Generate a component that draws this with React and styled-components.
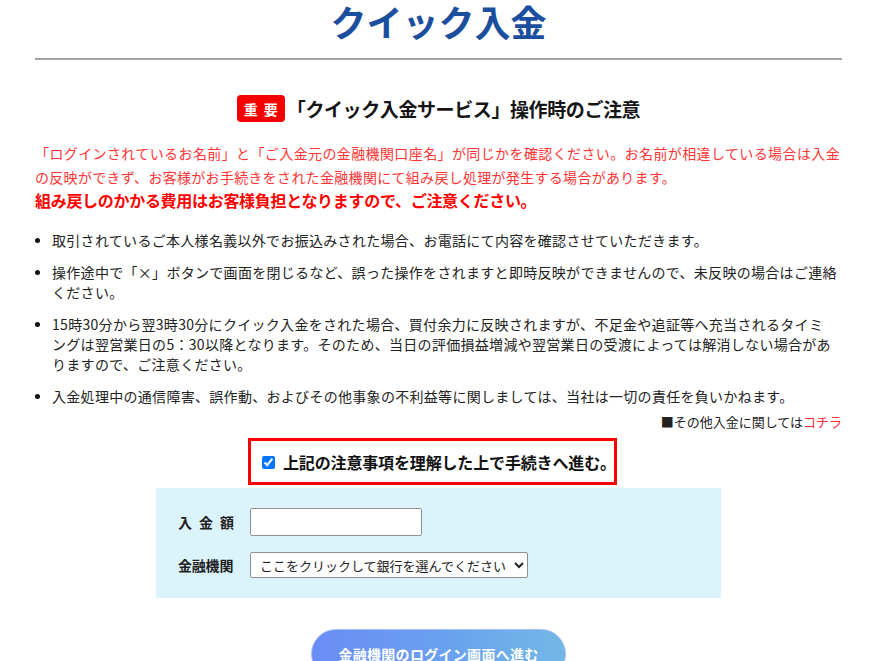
import React from "react";
import styled, { createGlobalStyle } from "styled-components";

const GlobalStyle = createGlobalStyle`
  html { overflow: hidden; }
  body {
    margin: 0;
    background: #fff;
    font-family: "Noto Sans CJK JP", "Noto Sans", sans-serif;
    color: #222;
    text-spacing-trim: space-all;
  }
`;

const Page = styled.div`
  width: 807px;
  margin-left: 35px;
`;

const Title = styled.h1`
  margin: 0;
  padding-top: 1px;
  text-align: center;
  font-size: 36px;
  line-height: 40px;
  font-weight: 700;
  color: #1b4f9e;
`;

const Rule = styled.hr`
  margin: 17px 0 0;
  height: 0;
  border: 0;
  border-top: 2px solid #a3a3a3;
`;

const NoticeHeading = styled.h2`
  margin: 35px 0 0;
  display: flex;
  justify-content: center;
  align-items: center;
  gap: 2px;
  font-weight: 700;
`;

const Badge = styled.span`
  display: inline-flex;
  align-items: center;
  justify-content: center;
  width: 48px;
  height: 27px;
  border-radius: 4px;
  background: #f50000;
  color: #fff;
  font-size: 14px;
  letter-spacing: 6px;
  text-indent: 6px;
`;

const HeadingText = styled.span`
  font-size: 19px;
  letter-spacing: -0.4px;
  line-height: 27px;
  color: #151515;
`;

const Warning = styled.div`
  margin: 19px 0 0;
  width: 805px;
  color: #ff3535;
  font-size: 14px;
  letter-spacing: 0.3px;
  line-height: 24px;
`;

const WarningLine = styled.span`
  display: block;
  white-space: nowrap;
  text-align: left;
  text-align-last: ${(p) => (p.$justify ? "justify" : "auto")};
  text-justify: inter-character;
`;

const WarningStrong = styled.p`
  margin: 0;
  color: #f00;
  font-weight: 700;
  font-size: 16px;
  letter-spacing: -0.3px;
  line-height: 22px;
`;

const NoteList = styled.ul`
  margin: 19px 0 0;
  padding: 0;
  list-style: none;
`;

const NoteItem = styled.li`
  display: flex;
  font-size: 14px;
  letter-spacing: 0.3px;
  line-height: 20px;
  color: #222;
  margin-bottom: 12px;
  &:last-child { margin-bottom: 0; }
`;

const Dot = styled.span`
  flex: none;
  width: 5px;
  height: 5px;
  border-radius: 50%;
  background: #111;
  margin: 8px 12px 0 0;
`;

const NoteText = styled.span`
  white-space: nowrap;
`;

const OtherLink = styled.p`
  margin: 6px 0 0;
  text-align: right;
  font-size: 13px;
  line-height: 20px;
  color: #222;
`;

const LinkText = styled.a`
  color: #ff2a3a;
  text-decoration: none;
`;

const ConsentWrap = styled.div`
  display: flex;
  justify-content: center;
  padding-right: 12px;
  margin-top: 6px;
`;

const ConsentBox = styled.label`
  box-sizing: border-box;
  width: 369px;
  height: 47px;
  border: 3px solid #f00;
  display: flex;
  align-items: center;
  padding-left: 11px;
  font-weight: 700;
  font-size: 16px;
  letter-spacing: -0.15px;
  color: #111;
  white-space: nowrap;
`;

const Checkbox = styled.input`
  width: 13px;
  height: 13px;
  margin: 1px 8px 0 0;
`;

const FormPanel = styled.div`
  box-sizing: border-box;
  width: 565px;
  margin: 3px auto 0;
  background: #dbf3fa;
  padding: 20px 0 20px 22px;
  display: flex;
  flex-direction: column;
  gap: 16px;
`;

const FormRow = styled.div`
  display: flex;
  align-items: center;
`;

const FieldLabel = styled.span`
  width: 72px;
  font-weight: 700;
  font-size: 14px;
  color: #1e1e1e;
  letter-spacing: ${(p) => (p.$spaced ? "7px" : "-0.2px")};
`;

const AmountInput = styled.input`
  box-sizing: border-box;
  width: 172px;
  height: 28px;
  border: 1px solid #8f8f8f;
  border-radius: 2px;
  background: #fff;
  font-size: 13px;
  padding: 0 4px;
`;

const BankSelect = styled.select`
  box-sizing: border-box;
  width: 278px;
  height: 26px;
  border: 1px solid #8f8f8f;
  border-radius: 2px;
  background: #fff;
  font-family: "Noto Sans CJK JP", sans-serif;
  font-size: 13px;
  color: #222;
  padding: 0 2px 0 5px;
`;

const ButtonWrap = styled.div`
  display: flex;
  justify-content: center;
  margin-top: 31px;
`;

const SubmitButton = styled.button`
  width: 255px;
  height: 50px;
  border-radius: 25px;
  border: 1px solid #a6bdf6;
  background: linear-gradient(90deg, #6a8cf6 0%, #6aa2ee 55%, #72b8e6 100%);
  color: #fff;
  font-family: "Noto Sans CJK JP", sans-serif;
  font-weight: 700;
  font-size: 14px;
  letter-spacing: 0.3px;
  cursor: pointer;
`;

export default function App() {
  return (
    <>
      <GlobalStyle />
      <Page>
        <Title>クイック入金</Title>
        <Rule />
        <NoticeHeading>
          <Badge>重要</Badge>
          <HeadingText>「クイック入金サービス」操作時のご注意</HeadingText>
        </NoticeHeading>
        <Warning>
          <WarningLine $justify>
            「ログインされているお名前」と「ご入金元の金融機関口座名」が同じかを確認ください。お名前が相違している場合は入金
          </WarningLine>
          <WarningLine>
            の反映ができず、お客様がお手続きをされた金融機関にて組み戻し処理が発生する場合があります。
          </WarningLine>
        </Warning>
        <WarningStrong>組み戻しのかかる費用はお客様負担となりますので、ご注意ください。</WarningStrong>
        <NoteList>
          <NoteItem>
            <Dot />
            <NoteText>取引されているご本人様名義以外でお振込みされた場合、お電話にて内容を確認させていただきます。</NoteText>
          </NoteItem>
          <NoteItem>
            <Dot />
            <NoteText>
              操作途中で「×」ボタンで画面を閉じるなど、誤った操作をされますと即時反映ができませんので、未反映の場合はご連絡<br />
              ください。
            </NoteText>
          </NoteItem>
          <NoteItem>
            <Dot />
            <NoteText>
              15時30分から翌3時30分にクイック入金をされた場合、買付余力に反映されますが、不足金や追証等へ充当されるタイミ<br />
              ングは翌営業日の5：30以降となります。そのため、当日の評価損益増減や翌営業日の受渡によっては解消しない場合があ<br />
              りますので、ご注意ください。
            </NoteText>
          </NoteItem>
          <NoteItem>
            <Dot />
            <NoteText>入金処理中の通信障害、誤作動、およびその他事象の不利益等に関しましては、当社は一切の責任を負いかねます。</NoteText>
          </NoteItem>
        </NoteList>
        <OtherLink>
          ■その他入金に関しては<LinkText href="#">コチラ</LinkText>
        </OtherLink>
        <ConsentWrap>
          <ConsentBox>
            <Checkbox type="checkbox" defaultChecked />
            上記の注意事項を理解した上で手続きへ進む。
          </ConsentBox>
        </ConsentWrap>
        <FormPanel>
          <FormRow>
            <FieldLabel $spaced>入金額</FieldLabel>
            <AmountInput type="text" />
          </FormRow>
          <FormRow>
            <FieldLabel>金融機関</FieldLabel>
            <BankSelect defaultValue="">
              <option value="">ここをクリックして銀行を選んでください</option>
            </BankSelect>
          </FormRow>
        </FormPanel>
        <ButtonWrap>
          <SubmitButton type="button">金融機関のログイン画面へ進む</SubmitButton>
        </ButtonWrap>
      </Page>
    </>
  );
}
